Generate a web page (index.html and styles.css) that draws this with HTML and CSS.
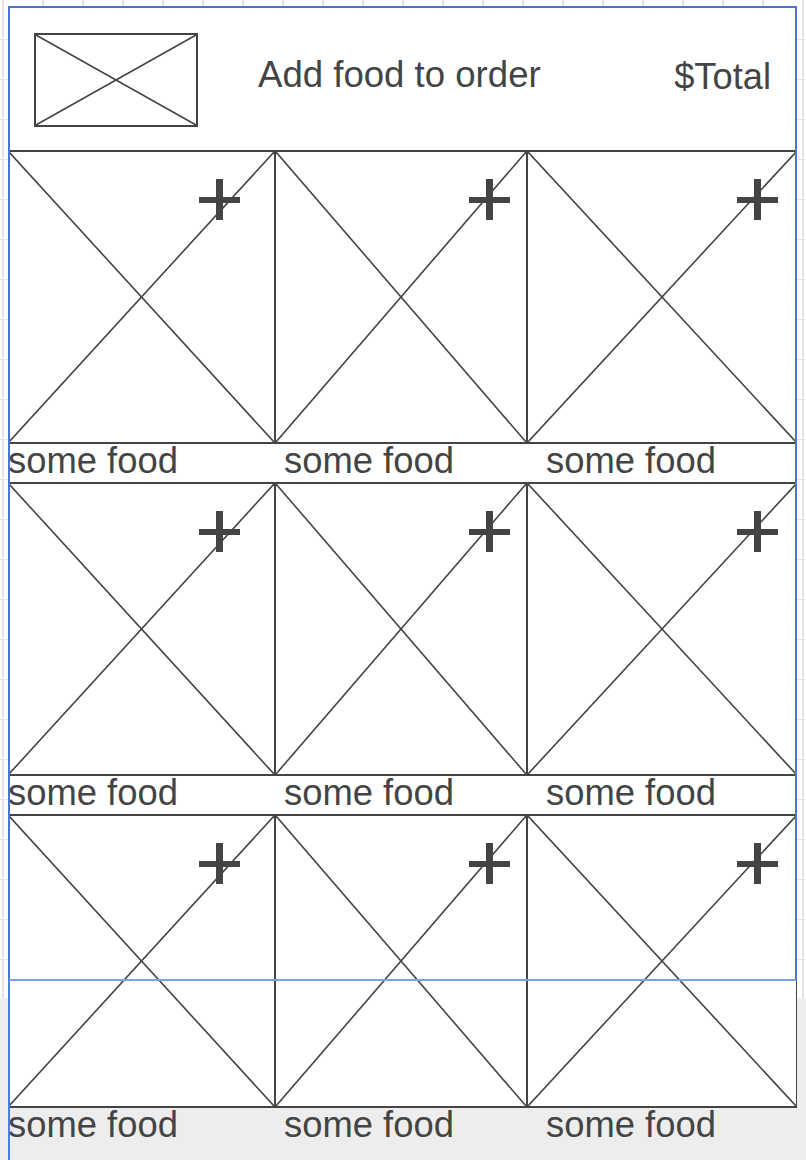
FILE: index.html
```html
<!DOCTYPE html>
<html lang="en">
<head>
  <meta charset="UTF-8" />
  <title>Add food to order</title>
  <meta name="viewport" content="width=device-width, initial-scale=1" />
  <link rel="stylesheet" href="styles.css">
</head>
<body>
  <div class="canvas">
    <div class="frame">
      <header class="order-head">
        <div class="logo">
          <svg class="cross" viewBox="0 0 100 100" preserveAspectRatio="none"><line x1="0" y1="0" x2="100" y2="100"/><line x1="100" y1="0" x2="0" y2="100"/></svg>
        </div>
        <h1 class="title">Add food to order</h1>
        <span class="total">$Total</span>
      </header>

      <div class="food-grid" id="foodGrid"></div>
    </div>
  </div>

  <template id="cardTpl">
    <div class="food-card">
      <div class="food-img">
        <svg class="cross" viewBox="0 0 100 100" preserveAspectRatio="none"><line x1="0" y1="0" x2="100" y2="100"/><line x1="100" y1="0" x2="0" y2="100"/></svg>
        <svg class="add" viewBox="0 0 41 41"><rect x="0" y="18" width="41" height="6"/><rect x="17" y="0" width="7" height="41"/></svg>
      </div>
      <div class="food-name">some food</div>
    </div>
  </template>

  <script>
    const grid = document.getElementById('foodGrid');
    const tpl = document.getElementById('cardTpl');

    for (let i = 0; i < 9; i++) {
      grid.appendChild(tpl.content.cloneNode(true));
    }
  </script>
</body>
</html>
```

FILE: styles.css
```css
body {
  margin: 0;
  font-family: 'Liberation Sans', Arial, sans-serif;
  color: #444;
}
.canvas {
  box-sizing: border-box;
  height: 1160px;
  overflow: hidden;
  padding: 6px 0 0 8px;
  background-color: #fff;
  background-image:
    linear-gradient(to bottom, transparent 998px, #ededed 998px),
    linear-gradient(to right, #e4e4e4 2px, transparent 2px),
    linear-gradient(to bottom, #e4e4e4 1px, transparent 1px);
  background-size: 100% 100%, 40px 40px, 40px 40px;
  background-position: 0 0, 2px -1px, 2px -1px;
  background-repeat: no-repeat, repeat, repeat;
}
.frame {
  position: relative;
  width: 789px;
  background: linear-gradient(to bottom, #fff 975px, transparent 975px);
}
/* selection outline drawn over the mockup */
.frame::after {
  content: "";
  position: absolute;
  left: 0;
  top: 0;
  width: 100%;
  height: 975px;
  box-sizing: border-box;
  border: 2px solid #4b74d3;
  border-bottom-color: #79a0ea;
  pointer-events: none;
  z-index: 2;
}
.frame::before {
  content: "";
  position: absolute;
  left: 0;
  top: 0;
  width: 2px;
  height: 1154px;
  background: #4c7ddd;
  z-index: 2;
}
.order-head {
  box-sizing: border-box;
  height: 144px;
  display: flex;
  align-items: flex-start;
  padding: 27px 0 0 26px;
}
.logo {
  box-sizing: border-box;
  width: 164px;
  height: 94px;
  border: 2px solid #444;
}
.cross {
  display: block;
  width: 100%;
  height: 100%;
}
.cross line {
  stroke: #444;
  stroke-width: 1.6;
  vector-effect: non-scaling-stroke;
}
.title {
  margin: 22px 0 0 60px;
  font-size: 36.6px;
  font-weight: normal;
  line-height: 40px;
}
.total {
  margin: 24px 26px 0 auto;
  font-size: 36.3px;
  line-height: 40px;
}
.food-grid {
  display: grid;
  grid-template-columns: 267px 252px 270px;
}
.food-img {
  position: relative;
  box-sizing: border-box;
  height: 294px;
  border: 2px solid #444;
  border-left-width: 1px;
  border-right-width: 1px;
  background: #fff;
}
.add {
  position: absolute;
  top: 27px;
  right: 34px;
  width: 41px;
  height: 41px;
  fill: #444;
}
.food-card:nth-child(3n+2) .add {
  right: 16px;
}
.food-card:nth-child(3n) .add {
  right: 18px;
}
.food-name {
  height: 38px;
  font-size: 36.4px;
  line-height: 34px;
  white-space: nowrap;
}
.food-card:nth-child(3n+2) .food-name {
  padding-left: 9px;
}
.food-card:nth-child(3n) .food-name {
  padding-left: 19px;
}
```
